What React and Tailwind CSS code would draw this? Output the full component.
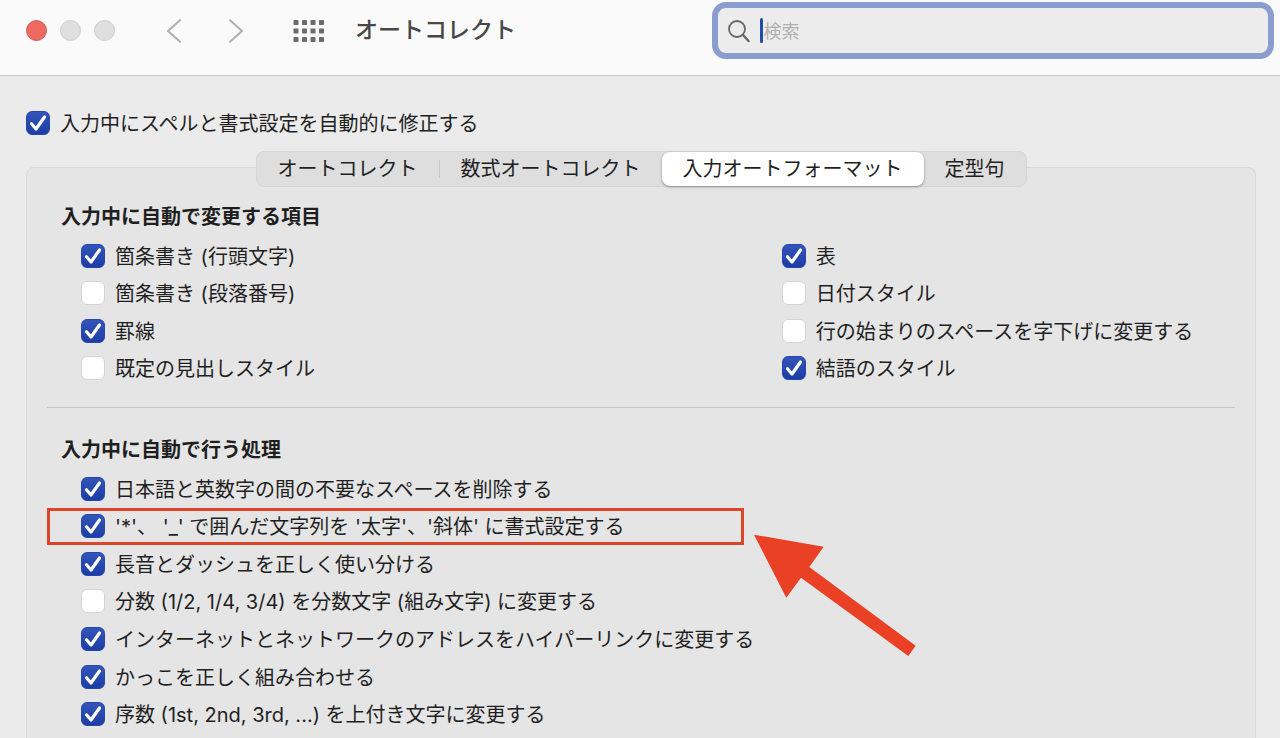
import React, { useState } from "react";

const TABS = ["オートコレクト", "数式オートコレクト", "入力オートフォーマット", "定型句"];

const REPLACE_LEFT = [
  { id: "bullets", label: "箇条書き (行頭文字)", on: true },
  { id: "numbering", label: "箇条書き (段落番号)", on: false },
  { id: "borders", label: "罫線", on: true },
  { id: "headings", label: "既定の見出しスタイル", on: false },
];

const REPLACE_RIGHT = [
  { id: "tables", label: "表", on: true },
  { id: "dates", label: "日付スタイル", on: false },
  { id: "indent", label: "行の始まりのスペースを字下げに変更する", on: false },
  { id: "closing", label: "結語のスタイル", on: true },
];

const ACTIONS = [
  { id: "spaces", label: "日本語と英数字の間の不要なスペースを削除する", on: true },
  { id: "emphasis", label: "'*'、 '_' で囲んだ文字列を '太字'、'斜体' に書式設定する", on: true, marked: true },
  { id: "dashes", label: "長音とダッシュを正しく使い分ける", on: true },
  { id: "fractions", label: "分数 (1/2, 1/4, 3/4) を分数文字 (組み文字) に変更する", on: false },
  { id: "links", label: "インターネットとネットワークのアドレスをハイパーリンクに変更する", on: true },
  { id: "brackets", label: "かっこを正しく組み合わせる", on: true },
  { id: "ordinals", label: "序数 (1st, 2nd, 3rd, ...) を上付き文字に変更する", on: true },
];

const CheckOption = ({ id, label, on }) => (
  <div className="flex items-center gap-[10px]">
    <span className="grid shrink-0">
      <input
        id={id}
        type="checkbox"
        defaultChecked={on}
        className="peer col-start-1 row-start-1 h-6 w-6 appearance-none rounded-md border border-[#d4d4d4] bg-white checked:border-[#2746ad] checked:bg-linear-to-b checked:from-[#3354b8] checked:to-[#1d3da6]"
      />
      <svg
        viewBox="0 0 24 24"
        className="pointer-events-none invisible col-start-1 row-start-1 h-6 w-6 peer-checked:visible"
        fill="none"
        stroke="white"
        strokeWidth="3.2"
        strokeLinecap="round"
        strokeLinejoin="round"
      >
        <path d="M5.5 12.8 10 18 18.5 6" />
      </svg>
    </span>
    <label htmlFor={id} className="pt-[2px] whitespace-nowrap">
      {label}
    </label>
  </div>
);

const Callout = () => (
  <>
    <div className="pointer-events-none absolute inset-y-0 -left-[34px] w-[697px] border-3 border-[#dd4429]" />
    <svg
      viewBox="0 0 162 123"
      className="pointer-events-none absolute top-[26px] left-[673px] z-10 h-[123px] w-[162px]"
      fill="#ea4025"
    >
      <path d="M0 .7 69.7 12.7 55.3 33 161.7 111.7 154.3 122 47 43.7 32.3 63.7Z" />
    </svg>
  </>
);

const OptionList = ({ options, className = "" }) => (
  <ul className={`grid auto-rows-fr ${className}`}>
    {options.map((option) => (
      <li key={option.id} className="relative grid items-center">
        <CheckOption id={option.id} label={option.label} on={option.on} />
        {option.marked ? <Callout /> : null}
      </li>
    ))}
  </ul>
);

const Toolbar = () => (
  <header className="flex border-b border-[#c9c9c9] bg-[#fafafa] pt-[2px] pr-[6px] pb-4 pl-[26px]">
    <div className="flex w-[55%] shrink-0 items-center">
      <div className="flex gap-[13px]">
        <button type="button" aria-label="閉じる" className="h-[21px] w-[21px] rounded-full border border-[#d95a50] bg-[#ec6a5f]" />
        <button type="button" aria-label="しまう" className="h-[21px] w-[21px] rounded-full border border-[#cdcdcd] bg-[#dfdfdf]" />
        <button type="button" aria-label="拡大" className="h-[21px] w-[21px] rounded-full border border-[#cdcdcd] bg-[#dfdfdf]" />
      </div>
      <div className="ml-[51px] flex gap-[46px]">
        <button type="button" aria-label="戻る">
          <svg viewBox="0 0 16 24" className="h-6 w-4" fill="none" stroke="#b2b2b2" strokeWidth="2.2" strokeLinecap="round" strokeLinejoin="round">
            <path d="M14 1.2 2 12 14 22.8" />
          </svg>
        </button>
        <button type="button" aria-label="進む">
          <svg viewBox="0 0 16 24" className="h-6 w-4" fill="none" stroke="#b2b2b2" strokeWidth="2.2" strokeLinecap="round" strokeLinejoin="round">
            <path d="M2 1.2 14 12 2 22.8" />
          </svg>
        </button>
      </div>
      <button type="button" aria-label="すべてを表示" className="ml-[49px]">
        <svg viewBox="0 0 32 22" className="h-[22px] w-8" fill="#6b6b6b">
          {[0, 8.5, 17].map((y) =>
            [0.5, 9, 17.5, 26].map((x) => (
              <rect key={`${x}-${y}`} x={x} y={y} width="5" height="5" rx="0.8" />
            )),
          )}
        </svg>
      </button>
      <h1 className="ml-[30px] text-[23px] font-medium text-[#484848]">オートコレクト</h1>
    </div>

    <label className="flex h-[57px] flex-1 items-center rounded-[14px] border-6 border-[#8a9dce] bg-[#ececec] pl-[9px]">
      <svg viewBox="0 0 24 24" className="h-6 w-6 shrink-0" fill="none" stroke="#666666" strokeLinecap="round">
        <circle cx="10" cy="10" r="8" strokeWidth="1.8" />
        <path d="m16 16 5.5 6" strokeWidth="2.4" />
      </svg>
      <span className="ml-[9px] h-[25px] w-[3px] shrink-0 rounded-full bg-[#2449a6]" />
      <input
        type="text"
        aria-label="検索"
        placeholder="検索"
        className="w-full min-w-0 bg-transparent pt-[2px] text-[18px] outline-none placeholder:text-[#b0b0b0]"
      />
    </label>
  </header>
);

const App = () => {
  const [activeTab, setActiveTab] = useState(TABS[2]);

  return (
    <div className="flex min-h-screen flex-col bg-[#ebebeb] font-['Inter','Noto_Sans_CJK_JP',sans-serif] text-xl text-[#1f1f1f]">
      <Toolbar />

      <main className="flex flex-1 flex-col pt-[32px] pr-6 pl-[26px]">
        <CheckOption id="auto-correct" label="入力中にスペルと書式設定を自動的に修正する" on />

        <section className="mt-[29px] flex flex-1 flex-col rounded-t-lg border border-b-0 border-[#d9d9d9] bg-[#e5e5e5] px-5">
          <div role="tablist" className="-mt-[17px] flex h-9 self-center rounded-lg border border-[#d6d6d6] bg-[#dedede]">
            {TABS.map((tab, index) => (
              <React.Fragment key={tab}>
                {index === 1 ? <span className="my-2 w-px bg-[#c6c6c6]" /> : null}
                <button
                  type="button"
                  role="tab"
                  aria-selected={tab === activeTab}
                  onClick={() => setActiveTab(tab)}
                  className={`flex items-center rounded-lg px-[21px] whitespace-nowrap ${
                    tab === activeTab ? "bg-white shadow-sm shadow-black/30" : ""
                  }`}
                >
                  {tab}
                </button>
              </React.Fragment>
            ))}
          </div>

          <h2 className="mt-[15px] pl-[14px] leading-[30px] font-bold">入力中に自動で変更する項目</h2>
          <div className="mt-[5px] grid grid-cols-[17fr_11fr] pl-[34px]">
            <OptionList options={REPLACE_LEFT} className="min-h-[150px]" />
            <OptionList options={REPLACE_RIGHT} className="min-h-[150px]" />
          </div>

          <hr className="mt-5 border-[#c6c6c6]" />

          <h2 className="mt-[27px] pl-[14px] leading-[30px] font-bold">入力中に自動で行う処理</h2>
          <OptionList options={ACTIONS} className="mt-[5px] min-h-[263px] pl-[34px]" />
        </section>
      </main>
    </div>
  );
};

export default App;
